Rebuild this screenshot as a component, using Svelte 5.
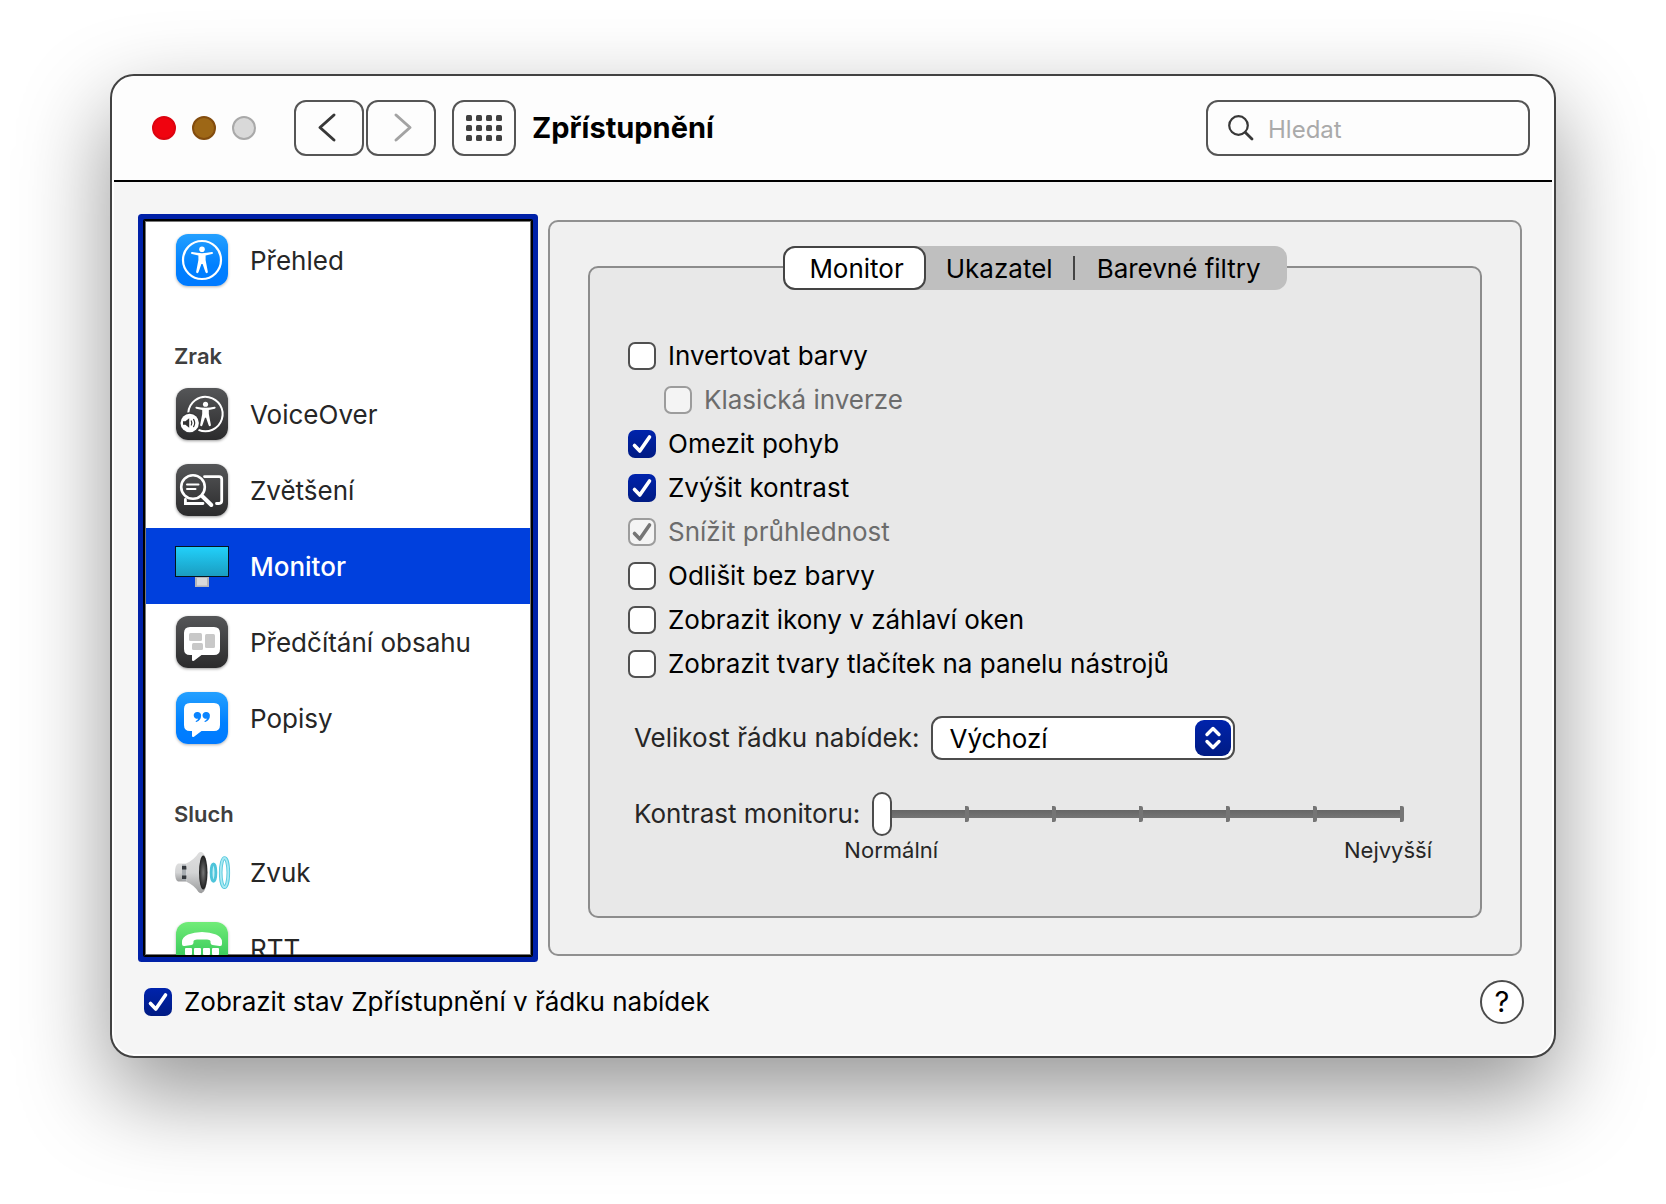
<script>
    let selected = $state("monitor");
    let tab = $state("Monitor");
    let contrast = $state(0);
    let query = $state("");
    let menuSize = $state("default");
    let showStatus = $state(true);

    const tabs = ["Monitor", "Ukazatel", "Barevné filtry"];
    const ticks = [1, 2, 3, 4, 5, 6];

    const groups = [
        { title: null, items: [{ id: "overview", label: "Přehled", tone: "blue" }] },
        {
            title: "Zrak",
            items: [
                { id: "voiceover", label: "VoiceOver", tone: "dark" },
                { id: "zoom", label: "Zvětšení", tone: "dark" },
                { id: "monitor", label: "Monitor", tone: "plain" },
                { id: "speech", label: "Předčítání obsahu", tone: "dark" },
                { id: "captions", label: "Popisy", tone: "blue" },
            ],
        },
        {
            title: "Sluch",
            items: [
                { id: "sound", label: "Zvuk", tone: "plain" },
                { id: "rtt", label: "RTT", tone: "green" },
            ],
        },
    ];

    let options = $state([
        { label: "Invertovat barvy", checked: false },
        { label: "Klasická inverze", checked: false, disabled: true, nested: true },
        { label: "Omezit pohyb", checked: true },
        { label: "Zvýšit kontrast", checked: true },
        { label: "Snížit průhlednost", checked: true, disabled: true },
        { label: "Odlišit bez barvy", checked: false },
        { label: "Zobrazit ikony v záhlaví oken", checked: false },
        { label: "Zobrazit tvary tlačítek na panelu nástrojů", checked: false },
    ]);
</script>

{#snippet tick()}
    <svg viewBox="0 0 28 28" aria-hidden="true">
        <path d="M6.5 15.5 L11.8 21 L21.5 7" />
    </svg>
{/snippet}

{#snippet person()}
    <circle cx="26" cy="15.3" r="2.8" fill="#fff" />
    <path
        fill="#fff"
        d="M16.2 18.1 Q26 20.2 35.8 18.1 Q37 18 37 19 Q37 19.8 36 20.1 L29.6 21.6 L29.6 26 L31.8 37.6 Q32 39 30.8 39.2 Q29.8 39.3 29.4 38.1 L26.6 30 L25.4 30 L22.6 38.1 Q22.2 39.3 21.2 39.2 Q20 39 20.2 37.6 L22.4 26 L22.4 21.6 L16 20.1 Q15 19.8 15 19 Q15 18 16.2 18.1 Z"
    />
{/snippet}

{#snippet bubble()}
    <path
        fill="#fff"
        d="M14 11 H38 Q44 11 44 17 V33 Q44 39 38 39 H25.5 L18 44.8 Q16 45.6 16 43.8 V39 H14 Q8 39 8 33 V17 Q8 11 14 11 Z"
    />
{/snippet}

{#snippet icon(id)}
    <svg viewBox="0 0 52 52" aria-hidden="true">
        {#if id === "overview"}
            <circle cx="26" cy="26" r="19" fill="none" stroke="#fff" stroke-width="2.2" />
            {@render person()}
        {:else if id === "voiceover"}
            <path
                d="M12.3 24.5 A17.2 17.2 0 1 1 22.5 41.8"
                fill="none"
                stroke="#fff"
                stroke-width="2"
            />
            <g transform="translate(5.6 2.2) scale(0.92)">{@render person()}</g>
            <circle cx="13.7" cy="35" r="10.4" fill="#37383a" />
            <circle cx="13.7" cy="35" r="9.2" fill="#fff" />
            <path d="M7 33.2 H9.4 L13.2 30.2 V39.8 L9.4 36.8 H7 Z" fill="#333" />
            <path
                d="M15.3 33 Q16.4 35 15.3 37 M17.6 31.4 Q19.8 35 17.6 38.6"
                fill="none"
                stroke="#333"
                stroke-width="1.2"
                stroke-linecap="round"
            />
        {:else if id === "zoom"}
            <g fill="none" stroke="#fff" stroke-linecap="round">
                <path d="M28.5 12.6 H43 Q45.7 12.6 45.7 15.3 V36.8 Q45.7 39.5 43 39.5 H40.5" stroke-width="2.8" />
                <path d="M9.4 35.5 V39.5 H27" stroke-width="2.8" />
                <circle cx="17" cy="23" r="11.8" stroke-width="2.6" />
                <path d="M26.3 32.2 L35.3 41" stroke-width="4" />
                <path d="M11 20.6 H22.5 M11 25 H19.5" stroke-width="2" />
            </g>
        {:else if id === "monitor"}
            <defs>
                <linearGradient id="screen" x1="0" y1="0" x2="0" y2="1">
                    <stop offset="0" stop-color="#22d1fb" />
                    <stop offset="1" stop-color="#1a9cc0" />
                </linearGradient>
            </defs>
            <rect x="19" y="37" width="14" height="10" fill="#b5b5b9" />
            <rect x="21" y="38" width="10" height="7.5" fill="#d8d8da" />
            <rect x="-0.5" y="6.5" width="53" height="30" fill="url(#screen)" stroke="#04131c" />
        {:else if id === "speech"}
            {@render bubble()}
            <g fill="#c8c8c8">
                <rect x="13" y="17" width="13" height="8" rx="1.5" />
                <rect x="29" y="18" width="10" height="14" rx="1.5" />
                <rect x="16" y="27" width="11" height="7" rx="1.5" />
            </g>
        {:else if id === "captions"}
            {@render bubble()}
            <g fill="#0a84ff">
                <path d="M21.4 20 A3.5 3.5 0 0 1 25.1 23.8 Q25.1 28.3 20.4 30 Q19.2 30 19.8 29 Q21.8 28.2 22.2 26.6 A3.4 3.4 0 1 1 21.4 20 Z" />
                <path d="M30.2 20 A3.5 3.5 0 0 1 33.9 23.8 Q33.9 28.3 29.2 30 Q28 30 28.6 29 Q30.6 28.2 31 26.6 A3.4 3.4 0 1 1 30.2 20 Z" />
            </g>
        {:else if id === "sound"}
            <defs>
                <linearGradient id="horn" x1="0" y1="0" x2="0" y2="1">
                    <stop offset="0" stop-color="#dedede" />
                    <stop offset="0.5" stop-color="#d3d4d5" />
                    <stop offset="1" stop-color="#9b9c9d" />
                </linearGradient>
                <radialGradient id="cone">
                    <stop offset="0" stop-color="#777" />
                    <stop offset="1" stop-color="#1d1d1d" />
                </radialGradient>
            </defs>
            <path d="M2 17.5 H10 V35.5 H2 Q-1 34 -1 26.5 Q-1 19 2 17.5 Z" fill="url(#horn)" />
            <rect x="6" y="18.5" width="4.5" height="16" fill="#a7acb1" />
            <path d="M6 20 H10.5 V23.5 H6 Z M6 29.5 H10.5 V33 H6 Z" fill="#34383d" />
            <path d="M10 17.5 Q18 14 22.5 7 Q24 5.5 26 6.2 V47 Q24 47.5 22.5 46 Q18 39 10 35.5 Q12 26 10 17.5 Z" fill="url(#horn)" />
            <ellipse cx="25.2" cy="26.6" rx="6.6" ry="20.4" fill="url(#horn)" />
            <ellipse cx="27.2" cy="26.6" rx="4.2" ry="17" fill="url(#cone)" />
            <g fill="none">
                <ellipse cx="37.5" cy="26.6" rx="2.4" ry="8.8" fill="#c4eff6" stroke="#4ec4da" stroke-width="2.8" />
                <ellipse cx="48.5" cy="26.6" rx="3.8" ry="14.6" stroke="#56c9dd" stroke-width="3.6" />
                <ellipse cx="48.5" cy="26.6" rx="3.8" ry="14.6" stroke="#a9e9f3" stroke-width="1.8" />
            </g>
        {:else if id === "rtt"}
            <path
                fill="#fff"
                d="M6 20 Q6 15 12 12.5 Q18 10 26 10 Q34 10 40 12.5 Q46 15 46 20 V22 Q46 24.5 43.5 24 L36.5 23 Q34.5 22.6 34.5 20.5 V19 Q34 17.4 31 17.4 H21 Q18 17.4 17.5 19 V20.5 Q17.5 22.6 15.5 23 L8.5 24 Q6 24.5 6 22 Z"
            />
            <g fill="#fff">
                {#each [9, 18, 27, 36] as x}
                    <rect {x} y="26" width="7" height="7" rx="1" />
                    <rect {x} y="35" width="7" height="7" rx="1" />
                {/each}
            </g>
        {/if}
    </svg>
{/snippet}

<div class="desktop">
    <main class="window">
        <header class="toolbar">
            <div class="lights">
                <button class="light close" aria-label="Zavřít"></button>
                <button class="light minimize" aria-label="Minimalizovat"></button>
                <button class="light zoom" aria-label="Zvětšit" disabled></button>
            </div>
            <div class="history">
                <button class="tool" aria-label="Zpět">
                    <svg class="chevron" viewBox="0 0 28 32" aria-hidden="true">
                        <path d="M19 3 L5 15.5 L19 28" />
                    </svg>
                </button>
                <button class="tool" aria-label="Vpřed" disabled>
                    <svg class="chevron" viewBox="0 0 28 32" aria-hidden="true">
                        <path d="M9 3 L23 15.5 L9 28" />
                    </svg>
                </button>
            </div>
            <button class="tool grid" aria-label="Zobrazit vše">
                <svg viewBox="0 0 36 28" width="36" height="28" aria-hidden="true">
                    {#each [1, 11, 21] as y}
                        {#each [0, 10, 20, 30] as x}
                            <rect {x} {y} width="6" height="6" rx="1.5" fill="#404040" />
                        {/each}
                    {/each}
                </svg>
            </button>
            <h1>Zpřístupnění</h1>
            <label class="search">
                <svg viewBox="0 0 26 26" aria-hidden="true">
                    <circle cx="10.5" cy="10.5" r="9.3" />
                    <path d="M17.4 17.4 L24 24" stroke-width="2.8" />
                </svg>
                <input type="text" placeholder="Hledat" aria-label="Hledat" bind:value={query} />
            </label>
        </header>

        <div class="body">
            <nav class="sidebar">
                {#each groups as group}
                    {#if group.title}
                        <h2>{group.title}</h2>
                    {/if}
                    {#each group.items as item}
                        <button
                            class="item"
                            class:selected={selected === item.id}
                            onclick={() => (selected = item.id)}
                        >
                            <span class="icon {item.tone}">{@render icon(item.id)}</span>
                            {item.label}
                        </button>
                    {/each}
                {/each}
            </nav>

            <section class="panel">
                <div class="tabs" role="tablist">
                    {#each tabs as name}
                        <button
                            class="tab"
                            role="tab"
                            aria-selected={tab === name}
                            class:active={tab === name}
                            onclick={() => (tab = name)}>{name}</button
                        >
                    {/each}
                </div>

                <div class="group">
                    {#each options as option}
                        <label class="option" class:nested={option.nested} class:disabled={option.disabled}>
                            <span class="box">
                                <input type="checkbox" bind:checked={option.checked} disabled={option.disabled} />
                                {@render tick()}
                            </span>
                            {option.label}
                        </label>
                    {/each}

                    <div class="field menu-size">
                        <label for="menu-size">Velikost řádku nabídek:</label>
                        <span class="select">
                            <select id="menu-size" bind:value={menuSize}>
                                <option value="default">Výchozí</option>
                                <option value="large">Velká</option>
                            </select>
                            <svg viewBox="0 0 36 36" aria-hidden="true">
                                <path d="M12 14.5 L18 8.5 L24 14.5 M12 21.5 L18 27.5 L24 21.5" />
                            </svg>
                        </span>
                    </div>

                    <div class="field contrast">
                        <label for="contrast">Kontrast monitoru:</label>
                        <div class="slider">
                            <div class="ticks">
                                {#each ticks as n (n)}
                                    <i></i>
                                {/each}
                            </div>
                            <input id="contrast" type="range" min="0" max="6" step="1" bind:value={contrast} />
                            <div class="scale">
                                <span>Normální</span>
                                <span>Nejvyšší</span>
                            </div>
                        </div>
                    </div>
                </div>
            </section>
        </div>

        <footer>
            <label class="option">
                <span class="box">
                    <input type="checkbox" bind:checked={showStatus} />
                    {@render tick()}
                </span>
                Zobrazit stav Zpřístupnění v řádku nabídek
            </label>
            <button class="help" aria-label="Nápověda">?</button>
        </footer>
    </main>
</div>

<style>
    :global(body) {
        background: #fff;
    }

    .desktop {
        box-sizing: border-box;
        min-height: 100vh;
        padding: 74px 110px;
        overflow: hidden;
    }

    .window,
    button,
    input,
    select {
        font-family: Inter, "Liberation Sans", sans-serif;
        font-size: 26px;
    }

    .window {
        border: 2px solid #424242;
        border-radius: 24px;
        background: #f5f5f5;
        color: #000;
        line-height: 32px;
        box-shadow:
            inset 0 0 0 2px #fff,
            0 36px 90px rgba(0, 0, 0, 0.42);
    }

    button {
        padding: 0;
        border: none;
        background: none;
        color: inherit;
    }

    .toolbar {
        display: flex;
        align-items: center;
        height: 104px;
        margin: 0 2px;
        padding: 0 22px 0 38px;
        border-bottom: 2px solid #000;
        border-radius: 22px 22px 0 0;
        background: #fdfdfd;
    }

    .lights {
        display: flex;
        gap: 16px;
        margin-right: 38px;
    }

    .light {
        width: 24px;
        height: 24px;
        border: 2px solid;
        border-radius: 50%;
    }

    .close {
        border-color: #dc0410;
        background: #f0030f;
    }

    .minimize {
        border-color: #834c0e;
        background: #9d6716;
    }

    .zoom {
        border-color: #a9a9a9;
        background: #d9d9d9;
    }

    .history {
        display: flex;
        gap: 2px;
        margin-right: 16px;
    }

    .tool {
        display: grid;
        place-items: center;
        width: 70px;
        height: 56px;
        border: 2px solid #555;
        border-radius: 12px;
    }

    .tool.grid {
        width: 64px;
    }

    .chevron {
        width: 28px;
        height: 32px;
        fill: none;
        stroke: #383838;
        stroke-width: 3;
        stroke-linecap: round;
        stroke-linejoin: round;
    }

    .tool:disabled .chevron {
        stroke: #a3a3a3;
    }

    h1 {
        margin: 0 auto 0 16px;
        font-size: 29px;
        font-weight: 700;
    }

    .search {
        display: flex;
        align-items: center;
        gap: 14px;
        box-sizing: border-box;
        width: 324px;
        height: 56px;
        padding: 0 20px;
        border: 2px solid #555;
        border-radius: 12px;
    }

    .search svg {
        flex: none;
        width: 26px;
        height: 26px;
        fill: none;
        stroke: #383838;
        stroke-width: 2.2;
        stroke-linecap: round;
    }

    .search input {
        flex: 1;
        min-width: 0;
        padding: 2px 0 0;
        border: none;
        outline: none;
        background: none;
        font-size: 24px;
    }

    .search input::placeholder {
        color: #aaa;
        opacity: 1;
    }

    .body {
        display: grid;
        grid-template-columns: 388px 1fr;
        gap: 16px;
        padding: 38px 32px 0;
    }

    /* the list never sets the row height, it scrolls inside it */
    .sidebar {
        box-sizing: border-box;
        height: 0;
        min-height: 100%;
        overflow-y: auto;
        scrollbar-width: none;
        padding: 1px;
        border: 1px solid #000;
        background: #fff;
        color: #262626;
        box-shadow:
            inset 0 0 0 1px #777,
            0 0 0 1px #000,
            0 0 0 6px #0021a8;
        border-radius: 1px;
    }

    .sidebar h2 {
        margin: 0;
        padding: 42px 28px 4px;
        color: #3f3f3f;
        font-size: 22px;
        font-weight: 600;
    }

    .item {
        display: flex;
        align-items: center;
        gap: 22px;
        width: 100%;
        height: 76px;
        padding: 0 30px;
    }

    .item.selected {
        background: #0040dd;
        color: #fff;
        font-weight: 500;
    }

    .icon {
        flex: none;
        width: 52px;
        height: 52px;
        border-radius: 12px;
    }

    .icon svg {
        display: block;
        overflow: visible;
    }

    .blue {
        background: linear-gradient(#24a0ff, #0080ff 60%, #007aff);
        box-shadow: 0 1px 3px rgba(0, 0, 0, 0.3);
    }

    .dark {
        background: linear-gradient(#555658, #2b2b2c);
        box-shadow: 0 1px 3px rgba(0, 0, 0, 0.4);
    }

    .green {
        background: linear-gradient(#71ec78, #1fb94e);
        box-shadow: 0 1px 3px rgba(0, 0, 0, 0.3);
    }

    .panel {
        padding: 24px 38px 36px;
        border: 2px solid #909090;
        border-radius: 10px;
        background: #f0f0f0;
    }

    .tabs {
        position: relative;
        display: flex;
        width: fit-content;
        height: 44px;
        margin: 0 auto -24px;
        border-radius: 12px;
        background: #bfbfbf;
    }

    .tab {
        display: flex;
        align-items: center;
        padding: 0 20px;
    }

    .tab.active {
        padding: 0 20px 0 24px;
        border: 2px solid #444;
        border-radius: 12px;
        background: #fff;
    }

    .tab:last-child {
        padding-right: 26px;
    }

    .tab:last-child:not(.active) {
        padding-left: 0;
    }

    .tab:last-child:not(.active)::before {
        content: "";
        width: 2px;
        height: 24px;
        margin-right: 22px;
        background: #444;
    }

    .group {
        padding: 66px 76px 52px 38px;
        border: 2px solid #8c8c8c;
        border-radius: 10px;
        background: #e8e8e8;
    }

    .option {
        display: flex;
        align-items: center;
        gap: 12px;
        height: 44px;
    }

    .option.nested {
        margin-left: 36px;
    }

    .option.disabled {
        color: #6c6c6c;
    }

    .box {
        display: grid;
        width: 28px;
        height: 28px;
    }

    .box input,
    .box svg {
        grid-area: 1 / 1;
    }

    .box input {
        appearance: none;
        box-sizing: border-box;
        width: 28px;
        height: 28px;
        margin: 0;
        border: 2px solid #505050;
        border-radius: 7px;
        background: #fff;
    }

    .box input:checked {
        border: none;
        background: linear-gradient(#0023ac, #001b83);
    }

    .box input:disabled {
        border: 2px solid #9c9c9c;
        background: #f4f4f4;
    }

    .box svg {
        fill: none;
        stroke: #fff;
        stroke-width: 3.6;
        stroke-linecap: round;
        stroke-linejoin: round;
        pointer-events: none;
        visibility: hidden;
    }

    .box input:checked + svg {
        visibility: visible;
    }

    .box input:disabled + svg {
        stroke: #757575;
    }

    .field {
        display: flex;
        gap: 12px;
        padding-left: 6px;
        color: #262626;
        line-height: 44px;
    }

    .menu-size {
        margin-top: 30px;
    }

    .contrast {
        margin-top: 32px;
    }

    .select {
        display: grid;
        width: 304px;
        height: 44px;
    }

    .select select,
    .select svg {
        grid-area: 1 / 1;
    }

    .select select {
        appearance: none;
        padding: 0 44px 0 16px;
        border: 2px solid #4c4c4c;
        border-radius: 11px;
        background: #fff;
        color: #000;
    }

    .select svg {
        place-self: center end;
        width: 36px;
        height: 36px;
        margin-right: 4px;
        border-radius: 9px;
        background: linear-gradient(#0023ac, #001b83);
        fill: none;
        stroke: #fff;
        stroke-width: 3.4;
        stroke-linecap: round;
        stroke-linejoin: round;
        pointer-events: none;
    }

    .slider {
        flex: 1;
        display: grid;
        grid-template-rows: 44px 28px;
    }

    .slider input,
    .ticks {
        grid-area: 1 / 1;
    }

    .slider input {
        appearance: none;
        z-index: 1;
        width: 100%;
        height: 44px;
        margin: 0;
        background: none;
    }

    .slider input::-webkit-slider-thumb {
        appearance: none;
        box-sizing: border-box;
        width: 20px;
        height: 44px;
        border: 2px solid #4c4c4c;
        border-radius: 10px;
        background: #fff;
    }

    .ticks {
        display: flex;
        align-items: center;
        margin-left: 10px;
        background: linear-gradient(#666, #757575) center / 100% 8px no-repeat;
    }

    .ticks i {
        flex: 1;
        height: 16px;
        border-right: 4px solid #757575;
        border-radius: 2px;
    }

    .scale {
        display: flex;
        justify-content: space-between;
        margin: 0 -28px;
        font-size: 22px;
        line-height: 28px;
    }

    footer {
        display: flex;
        align-items: center;
        justify-content: space-between;
        padding: 24px 30px 32px 32px;
    }

    .help {
        width: 44px;
        height: 44px;
        border: 2px solid #4c4c4c;
        border-radius: 50%;
        background: #fff;
        font-size: 29px;
        line-height: 40px;
    }
</style>
